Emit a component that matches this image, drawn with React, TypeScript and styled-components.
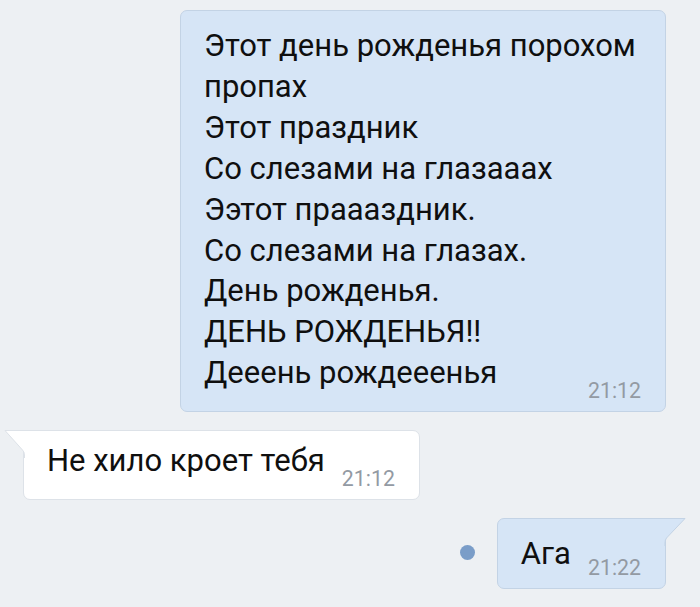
import React from "react";
import styled, { createGlobalStyle } from "styled-components";

const Global = createGlobalStyle`
  html, body { margin: 0; padding: 0; background: #edf0f3; }
  body { font-family: Roboto, "Noto Sans", sans-serif; -webkit-font-smoothing: antialiased; }
`;

const Page = styled.div`
  width: 700px;
  height: 607px;
  box-sizing: border-box;
  padding: 10px 34px 0 23px;
  display: flex;
  flex-direction: column;
  gap: 18px;
  background: #edf0f3;
  overflow: hidden;
`;

const Row = styled.div<{ $out?: boolean }>`
  display: flex;
  align-items: center;
  justify-content: ${(p) => (p.$out ? "flex-end" : "flex-start")};
  gap: 22px;
`;

const Bubble = styled.div<{ $out?: boolean; $tail?: boolean; $padTop?: number; $maxWidth?: number }>`
  position: relative;
  display: inline-flex;
  flex-direction: column;
  box-sizing: border-box;
  max-width: ${(p) => (p.$maxWidth ? `${p.$maxWidth}px` : "none")};
  padding: ${(p) => p.$padTop ?? 15}px 24px 10px 23px;
  background: ${(p) => (p.$out ? "#d6e5f6" : "#ffffff")};
  border: 1px solid ${(p) => (p.$out ? "#c3d3e5" : "#dde2e8")};
  border-radius: 7px;
  ${(p) =>
    p.$tail
      ? p.$out
        ? "border-top-right-radius: 0;"
        : "border-top-left-radius: 0;"
      : ""}
  color: #0f0f0f;
  font-size: 31px;
  line-height: 40.9px;
`;

const Line = styled.div`
  white-space: normal;
`;

const Footer = styled.div`
  display: flex;
  align-items: flex-end;
  justify-content: space-between;
  gap: 17px;
`;

const LastLine = styled.div<{ $drop?: number }>`
  margin-bottom: ${(p) => p.$drop ?? 7}px;
  white-space: nowrap;
`;

const Time = styled.span`
  font-size: 21.3px;
  line-height: 21px;
  color: #939aa3;
  white-space: nowrap;
`;

const TailSvg = styled.svg<{ $out?: boolean }>`
  position: absolute;
  top: -1px;
  ${(p) => (p.$out ? "right: -21px;" : "left: -20px;")}
  width: 22px;
  height: 28px;
  overflow: visible;
`;

const UnreadDot = styled.span`
  width: 15px;
  height: 15px;
  border-radius: 50%;
  background: #7a9dc8;
  flex: none;
  margin-top: -3px;
`;

function Tail({ out }: { out?: boolean }) {
  if (out) {
    return (
      <TailSvg $out viewBox="0 0 22 28">
        <path d="M0 0.5 H21 L2.5 20 Q1 22 1 25 V28 H0 Z" fill="#d6e5f6" />
        <path d="M0 0.5 H21 L2.5 20 Q1 22 1 25 V28" fill="none" stroke="#c3d3e5" strokeWidth="1" />
      </TailSvg>
    );
  }
  return (
    <TailSvg viewBox="0 0 22 28">
      <path d="M22 0.5 H1 L18.5 20 Q20.5 22 20.5 25 V28 H22 Z" fill="#ffffff" />
      <path d="M22 0.5 H1 L18.5 20 Q20.5 22 20.5 25 V28" fill="none" stroke="#dde2e8" strokeWidth="1" />
    </TailSvg>
  );
}

type Msg = {
  lines: string[];
  time: string;
  out?: boolean;
  tail?: boolean;
  unread?: boolean;
  padTop?: number;
  maxWidth?: number;
  drop?: number;
};

const messages: Msg[] = [
  {
    lines: [
      "Этот день рожденья порохом пропах",
      "Этот праздник",
      "Со слезами на глазааах",
      "Ээтот праааздник.",
      "Со слезами на глазах.",
      "День рожденья.",
      "ДЕНЬ РОЖДЕНЬЯ!!",
      "Дееень рождееенья",
    ],
    time: "21:12",
    out: true,
    padTop: 15,
    maxWidth: 486,
  },
  { lines: ["Не хило кроет тебя"], time: "21:12", tail: true, padTop: 10 },
  { lines: ["Ага"], time: "21:22", out: true, tail: true, unread: true, padTop: 15, drop: 3 },
];

export default function App() {
  return (
    <>
      <Global />
      <Page>
        {messages.map((m, i) => {
          const head = m.lines.slice(0, -1);
          const last = m.lines[m.lines.length - 1];
          return (
            <Row key={i} $out={m.out}>
              {m.unread && <UnreadDot />}
              <Bubble $out={m.out} $tail={m.tail} $padTop={m.padTop} $maxWidth={m.maxWidth}>
                {m.tail && <Tail out={m.out} />}
                {head.map((l, j) => (
                  <Line key={j}>{l}</Line>
                ))}
                <Footer>
                  <LastLine $drop={m.drop}>{last}</LastLine>
                  <Time>{m.time}</Time>
                </Footer>
              </Bubble>
            </Row>
          );
        })}
      </Page>
    </>
  );
}
